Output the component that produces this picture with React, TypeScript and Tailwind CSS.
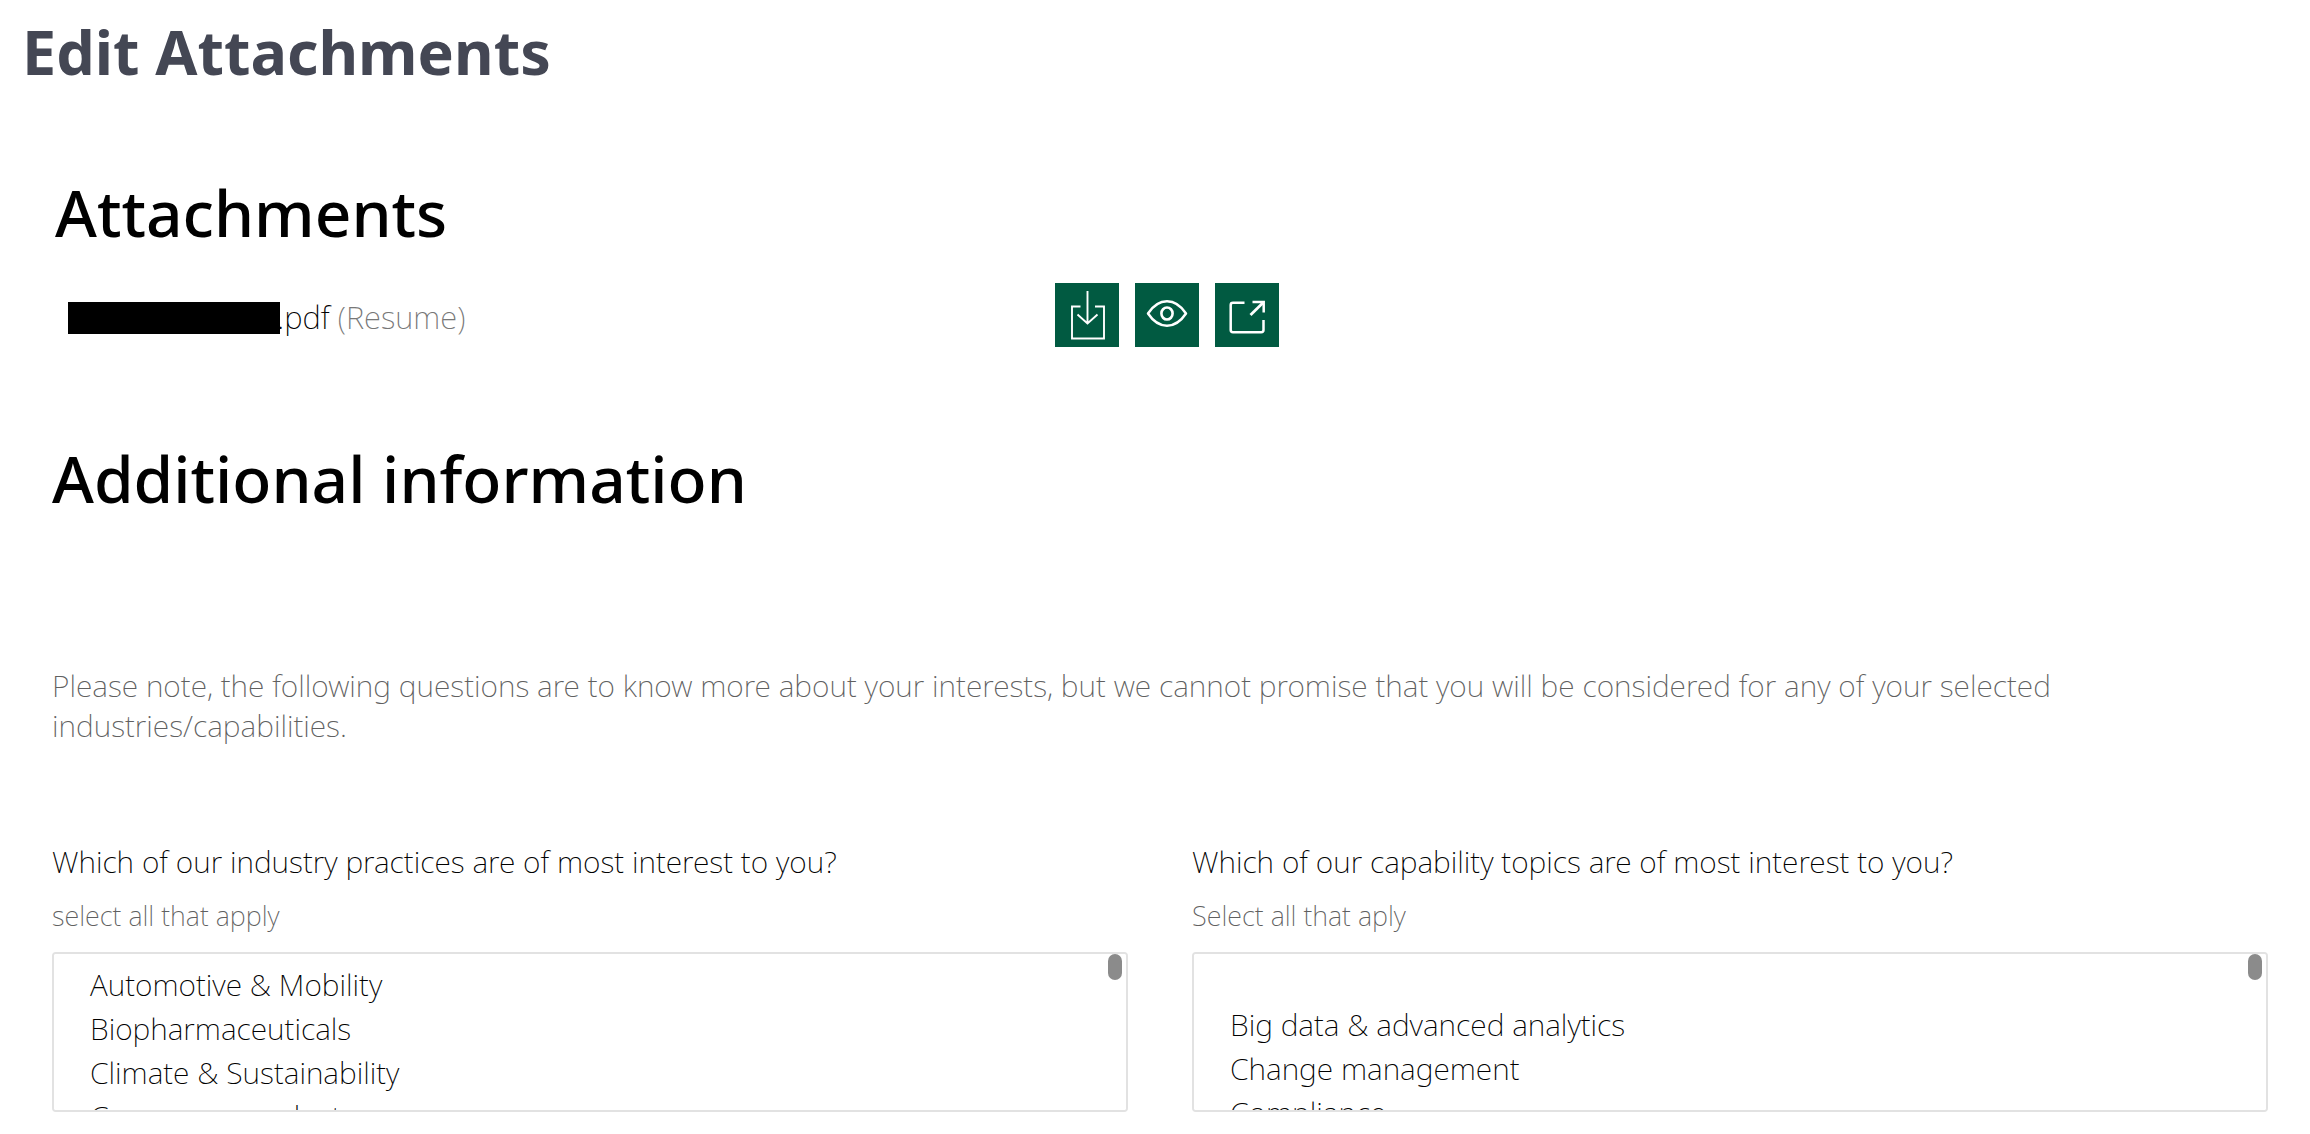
import type { ReactNode } from "react";

const industries = [
  "Automotive & Mobility",
  "Biopharmaceuticals",
  "Climate & Sustainability",
  "Consumer products",
  "Education",
  "Energy",
  "Financial institutions",
];

const capabilities = [
  "",
  "Big data & advanced analytics",
  "Change management",
  "Compliance",
  "Corporate finance & strategy",
  "Customer insights",
];

function IconButton({ label, children }: { label: string; children: ReactNode }) {
  return (
    <button type="button" aria-label={label} className="size-16 bg-[#015a41] text-white">
      <svg viewBox="0 0 64 64" className="size-16" fill="none" stroke="currentColor">
        {children}
      </svg>
    </button>
  );
}

function MultiSelect({
  id,
  label,
  hint,
  options,
}: {
  id: string;
  label: string;
  hint: string;
  options: string[];
}) {
  return (
    <div className="flex flex-col">
      <label htmlFor={id} className="text-[30px] leading-10 text-black">
        {label}
      </label>
      <p id={`${id}-hint`} className="mt-[18px] text-[27px] leading-8 text-[#606060]">
        {hint}
      </p>
      <div className="relative mt-5">
        <select
          id={id}
          multiple
          aria-describedby={`${id}-hint`}
          className="block h-40 w-full rounded-sm border-2 border-[#e2e2e2] bg-white pt-2.5 text-[30px] text-black outline-none [scrollbar-width:none]"
        >
          {options.map((option) => (
            <option
              key={option}
              value={option}
              className={
                option === ""
                  ? "h-10 min-h-0 p-0"
                  : "h-11 min-h-0 p-0 pl-9 leading-[44px] font-extralight"
              }
            >
              {option}
            </option>
          ))}
        </select>
        <span
          aria-hidden="true"
          className="absolute top-0.5 right-1.5 h-[26px] w-3.5 rounded-full bg-[#8b8b8b]"
        />
      </div>
    </div>
  );
}

export default function App() {
  return (
    <main className="bg-white pt-4 font-['Noto_Sans',sans-serif] font-extralight">
      <h1 className="pl-[22px] text-[61px] leading-[72px] font-bold text-[#444754]">
        Edit Attachments
      </h1>

      <section className="mt-[85px] pr-[42px] pl-[52px]">
        <h2 className="pl-[3px] text-[64px] leading-[80px] font-medium text-black">Attachments</h2>
        <div className="mt-[30px] grid grid-cols-[1003fr_1213fr] items-center">
          <p className="flex items-end pt-1 pl-4 text-[31px] leading-[44px] text-black">
            <span className="mb-[5px] h-8 w-[212px] bg-black" />
            <span className="-ml-[3px]">
              .pdf <span className="text-[#777777]">(Resume)</span>
            </span>
          </p>
          <div className="flex gap-4">
            <IconButton label="Download">
              <path
                d="M25.5 23.5H17V55.5H49V23.5H40M32.5 8V40M22.5 31.5L32.5 40.5L42.5 31.5"
                strokeWidth="1.9"
              />
            </IconButton>
            <IconButton label="Preview">
              <path
                d="M13 30.5C18 23 24.5 18.3 32 18.3S46 23 51 30.5C46 38 39.5 42.7 32 42.7S18 38 13 30.5Z"
                strokeWidth="2.5"
                strokeLinejoin="round"
              />
              <ellipse cx="32" cy="30.5" rx="5.6" ry="6" strokeWidth="2.6" />
            </IconButton>
            <IconButton label="Open in new window">
              <path
                d="M29.5 19.8H18Q15.7 19.8 15.7 22V47Q15.7 49.2 18 49.2H46.2Q48.5 49.2 48.5 47V37"
                strokeWidth="2.5"
              />
              <path d="M37.5 19H48.7V29.5" strokeWidth="2.5" />
              <path d="M35.5 32L48 19.7" strokeWidth="2.8" />
            </IconButton>
          </div>
        </div>
      </section>

      <section className="mt-[92px] pr-[42px] pl-[52px]">
        <h2 className="text-[64px] leading-[80px] font-medium text-black">
          Additional information
        </h2>
        <p className="mt-[147px] text-[30px] leading-10 text-[#606060]">
          Please note, the following questions are to know more about your interests, but we cannot
          promise that you will be considered for any of your selected industries/capabilities.
        </p>
        <form className="mt-24 grid grid-cols-2 gap-16">
          <MultiSelect
            id="industries"
            label="Which of our industry practices are of most interest to you?"
            hint="select all that apply"
            options={industries}
          />
          <MultiSelect
            id="capabilities"
            label="Which of our capability topics are of most interest to you?"
            hint="Select all that aply"
            options={capabilities}
          />
        </form>
      </section>
    </main>
  );
}
